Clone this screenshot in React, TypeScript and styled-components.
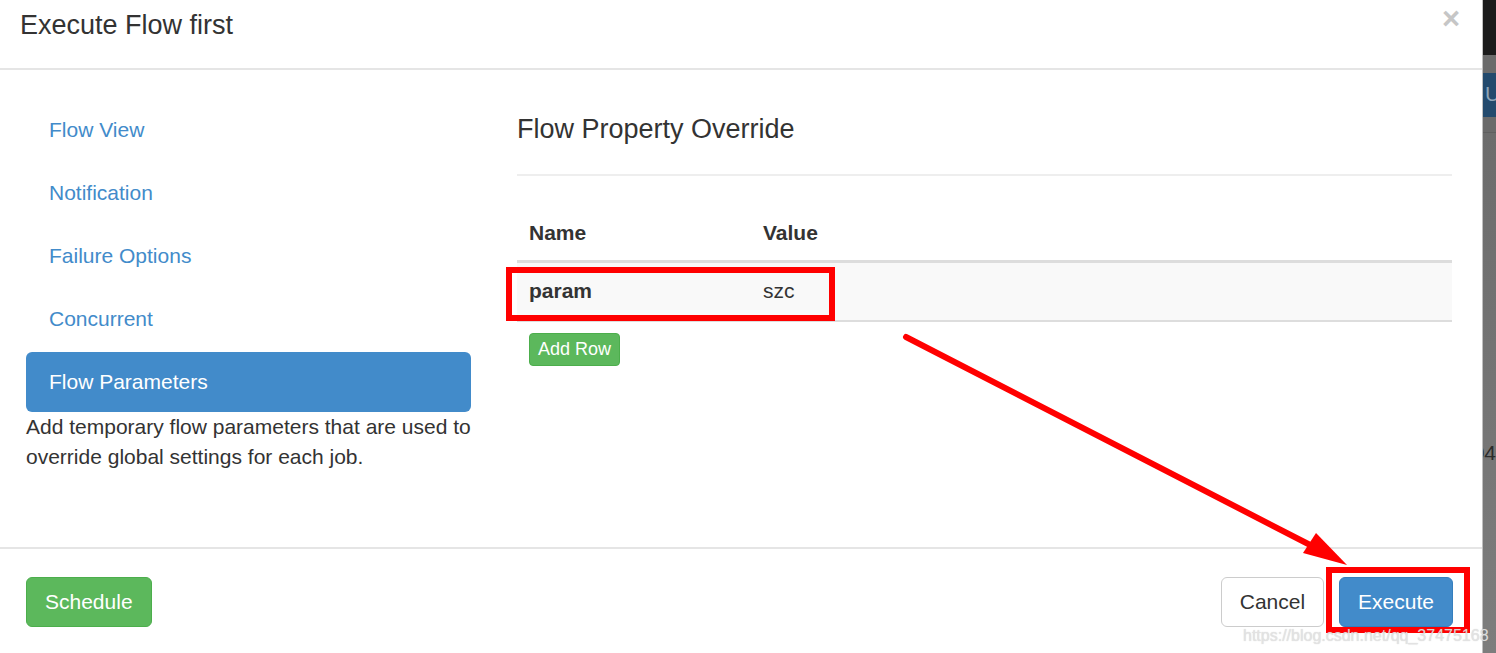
import styled, { createGlobalStyle } from "styled-components";

const GlobalStyle = createGlobalStyle`
  html, body {
    margin: 0;
    padding: 0;
    background: #fff;
  }
  body {
    font-family: "Liberation Sans", Arial, Helvetica, sans-serif;
    color: #333;
  }
`;

const Page = styled.div`
  position: relative;
  display: flex;
  width: 1496px;
  height: 653px;
  overflow: hidden;
`;

const Modal = styled.div`
  position: relative;
  width: 1482px;
  height: 653px;
  display: flex;
  flex-direction: column;
  background: #fff;
`;

const Header = styled.div`
  height: 68px;
  display: flex;
  justify-content: space-between;
  align-items: flex-start;
  padding: 0 22px 0 20px;
  border-bottom: 2px solid #e5e5e5;
`;

const Title = styled.h4`
  margin: 6px 0 0;
  font-size: 27px;
  font-weight: normal;
  line-height: 38px;
  color: #333;
`;

const Close = styled.button`
  margin-top: 3px;
  padding: 0;
  border: 0;
  background: transparent;
  font-family: inherit;
  font-size: 31px;
  font-weight: bold;
  line-height: 31px;
  color: #c6c6c6;
  cursor: pointer;
`;

const Body = styled.div`
  flex: 1;
  display: grid;
  grid-template-columns: 445px 935px;
  column-gap: 46px;
  padding: 30px 0 0 26px;
`;

const Nav = styled.ul`
  list-style: none;
  margin: 0;
  padding: 0;
`;

const NavItem = styled.li`
  & + & {
    margin-top: 3px;
  }
`;

const NavLink = styled.a<{ $active?: boolean }>`
  display: block;
  height: 60px;
  padding: 0 23px;
  font-size: 21px;
  line-height: 60px;
  border-radius: 6px;
  text-decoration: none;
  color: ${(p) => (p.$active ? "#fff" : "#428bca")};
  background: ${(p) => (p.$active ? "#428bca" : "transparent")};
  cursor: pointer;
`;

const Help = styled.p`
  margin: 0;
  font-size: 21px;
  line-height: 30px;
  color: #333;
`;

const Section = styled.div`
  display: flex;
  flex-direction: column;
  align-items: flex-start;
`;

const SectionTitle = styled.h4`
  margin: 10px 0 0;
  font-size: 27px;
  font-weight: normal;
  line-height: 38px;
  color: #333;
`;

const Rule = styled.hr`
  align-self: stretch;
  margin: 26px 0 0;
  border: 0;
  border-top: 2px solid #eee;
`;

const Table = styled.table`
  width: 100%;
  margin-top: 30px;
  border-collapse: collapse;
  table-layout: fixed;
  font-size: 21px;
  line-height: 30px;
`;

const Th = styled.th<{ $w?: number }>`
  width: ${(p) => (p.$w ? `${p.$w}px` : "auto")};
  padding: 12px 12px;
  text-align: left;
  font-weight: bold;
  border-bottom: 3px solid #ddd;
`;

const Row = styled.tr`
  background: #f9f9f9;
`;

const Td = styled.td<{ $bold?: boolean }>`
  padding: 13px 12px 14px;
  font-weight: ${(p) => (p.$bold ? "bold" : "normal")};
  border-bottom: 2px solid #ddd;
`;

const Button = styled.button<{ $kind: "success" | "primary" | "default"; $size?: "xs" }>`
  font-family: inherit;
  font-size: ${(p) => (p.$size === "xs" ? "18px" : "21px")};
  line-height: ${(p) => (p.$size === "xs" ? "27px" : "30px")};
  padding: ${(p) => (p.$size === "xs" ? "2px 8px" : "9px 18px")};
  border-radius: ${(p) => (p.$size === "xs" ? "4px" : "6px")};
  border: 1px solid
    ${(p) =>
      p.$kind === "success" ? "#4cae4c" : p.$kind === "primary" ? "#357ebd" : "#ccc"};
  background: ${(p) =>
    p.$kind === "success" ? "#5cb85c" : p.$kind === "primary" ? "#428bca" : "#fff"};
  color: ${(p) => (p.$kind === "default" ? "#333" : "#fff")};
  cursor: pointer;
  white-space: nowrap;
`;

const AddRow = styled(Button)`
  margin: 11px 0 0 12px;
`;

const Footer = styled.div`
  height: 106px;
  display: flex;
  justify-content: space-between;
  align-items: flex-start;
  padding: 28px 29px 0 26px;
  border-top: 2px solid #e5e5e5;
  box-sizing: border-box;
`;

const FooterRight = styled.div`
  display: flex;
  gap: 15px;
`;

const Annotations = styled.svg`
  position: absolute;
  left: 0;
  top: 0;
  pointer-events: none;
`;

const Watermark = styled.span`
  position: absolute;
  left: 1243px;
  top: 625px;
  font-size: 16px;
  line-height: 22px;
  color: rgba(228, 228, 228, 0.92);
  text-shadow: 0 0 1px rgba(150, 150, 150, 0.45);
  white-space: nowrap;
  pointer-events: none;
`;

/* the darkened page behind the modal, seen at the right edge */
const Backdrop = styled.div`
  width: 14px;
  height: 653px;
  display: flex;
  flex-direction: column;
  overflow: hidden;
  border-left: 1px solid rgba(0, 0, 0, 0.25);
  box-sizing: border-box;
`;

const Band = styled.div<{ $h: number; $bg: string }>`
  height: ${(p) => p.$h}px;
  flex: none;
  background: ${(p) => p.$bg};
  overflow: hidden;
  white-space: nowrap;
  font-size: 21px;
`;

const BandLabel = styled.div`
  padding: 9px 0 0 2px;
  color: #8ea4b8;
`;

const Rest = styled.div`
  flex: 1;
  background: linear-gradient(to bottom, #6c6c6c, #7d7d7d);
  border-top: 1px solid #5f5f5f;
  overflow: hidden;
  display: flex;
  flex-direction: column;
  align-items: flex-end;
`;

const Digits = styled.div`
  margin-top: 305px;
  font-size: 21px;
  line-height: 30px;
  color: #2c2c2c;
  white-space: nowrap;
`;

const navItems = ["Flow View", "Notification", "Failure Options", "Concurrent", "Flow Parameters"];

export default function App() {
  return (
    <Page>
      <GlobalStyle />
      <Modal>
        <Header>
          <Title>Execute Flow first</Title>
          <Close aria-label="Close">×</Close>
        </Header>

        <Body>
          <div>
            <Nav>
              {navItems.map((item) => (
                <NavItem key={item}>
                  <NavLink $active={item === "Flow Parameters"}>{item}</NavLink>
                </NavItem>
              ))}
            </Nav>
            <Help>
              Add temporary flow parameters that are used to override global settings for each job.
            </Help>
          </div>

          <Section>
            <SectionTitle>Flow Property Override</SectionTitle>
            <Rule />
            <Table>
              <thead>
                <tr>
                  <Th $w={210}>Name</Th>
                  <Th>Value</Th>
                </tr>
              </thead>
              <tbody>
                <Row>
                  <Td $bold>param</Td>
                  <Td>szc</Td>
                </Row>
              </tbody>
            </Table>
            <AddRow $kind="success" $size="xs">
              Add Row
            </AddRow>
          </Section>
        </Body>

        <Footer>
          <Button $kind="success">Schedule</Button>
          <FooterRight>
            <Button $kind="default">Cancel</Button>
            <Button $kind="primary">Execute</Button>
          </FooterRight>
        </Footer>

        <Annotations width="1482" height="653" viewBox="0 0 1482 653">
          <rect x="509" y="270" width="323" height="48" fill="none" stroke="#ff0000" strokeWidth="6" />
          <rect x="1329" y="570" width="138" height="60" fill="none" stroke="#ff0000" strokeWidth="6" />
          <line
            x1="906"
            y1="337"
            x2="1318"
            y2="549"
            stroke="#ff0000"
            strokeWidth="6"
            strokeLinecap="round"
          />
          <polygon points="1347,565 1303,553 1316,533" fill="#ff0000" />
        </Annotations>
      </Modal>

      <Backdrop>
        <Band $h={55} $bg="#1b1b1b" />
        <Band $h={18} $bg="#6b6b6b" />
        <Band $h={44} $bg="#234a6d">
          <BandLabel>U</BandLabel>
        </Band>
        <Band $h={15} $bg="#6a6a6a" />
        <Rest>
          <Digits>04</Digits>
        </Rest>
      </Backdrop>

      <Watermark>https://blog.csdn.net/qq_37475168</Watermark>
    </Page>
  );
}
